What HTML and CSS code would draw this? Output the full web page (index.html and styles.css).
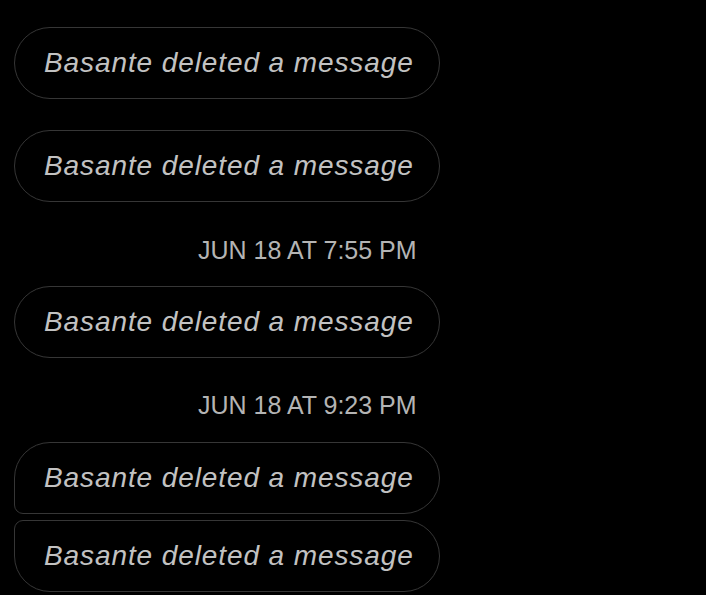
FILE: index.html
```html
<!DOCTYPE html>
<html>
<head>
<meta charset="utf-8">
<link rel="stylesheet" href="styles.css">
</head>
<body>
<div class="thread">
  <div class="bubble">Basante deleted a message</div>
  <div class="bubble gap-lg">Basante deleted a message</div>
  <div class="stamp first">JUN 18 AT 7:55 PM</div>
  <div class="bubble">Basante deleted a message</div>
  <div class="stamp second">JUN 18 AT 9:23 PM</div>
  <div class="bubble group-top">Basante deleted a message</div>
  <div class="bubble group-bottom">Basante deleted a message</div>
</div>
</body>
</html>
```

FILE: styles.css
```css
html, body {
  margin: 0;
  padding: 0;
  background: #000;
  height: 100%;
  overflow: hidden;
}
.thread {
  display: flex;
  flex-direction: column;
  align-items: flex-start;
  padding: 27px 0 0 14px;
}
.bubble {
  box-sizing: border-box;
  height: 72px;
  line-height: 70px;
  padding: 0 25px 0 29px;
  border: 1.5px solid #363636;
  border-radius: 36px;
  font-family: "Liberation Sans", Arial, sans-serif;
  font-style: italic;
  font-size: 28px;
  letter-spacing: 0.9px;
  color: #c2c2c2;
  white-space: nowrap;
}
.gap-lg {
  margin-top: 31px;
}
.stamp {
  font-family: "Liberation Sans", Arial, sans-serif;
  font-size: 25px;
  line-height: 28px;
  color: #b4b4b4;
  margin-left: 184px;
}
.stamp.first {
  margin-top: 34px;
  margin-bottom: 22px;
}
.stamp.second {
  margin-top: 33px;
  margin-bottom: 23px;
}
.group-top {
  border-bottom-left-radius: 9px;
}
.group-bottom {
  margin-top: 6px;
  border-top-left-radius: 9px;
}
```
